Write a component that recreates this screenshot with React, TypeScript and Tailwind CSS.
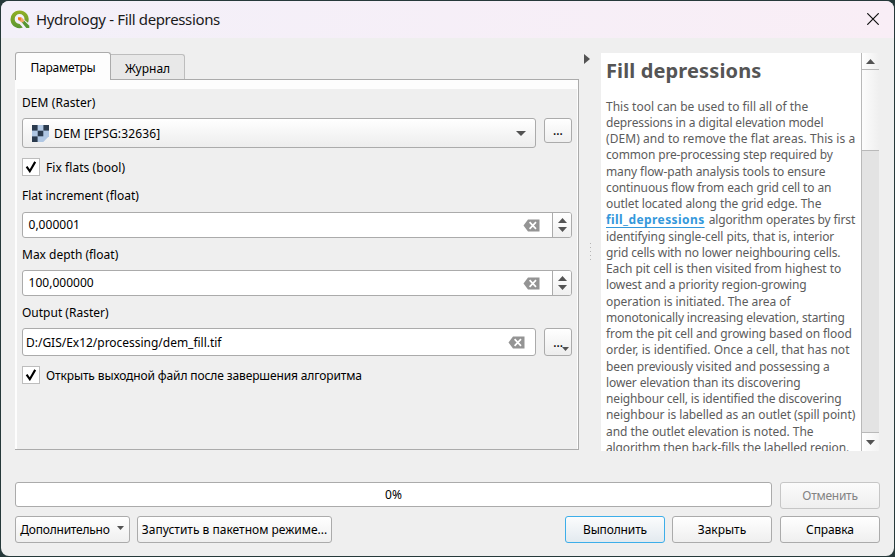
import type { ReactNode } from "react";

const helpBefore: [string, string][] = [
  ["This tool can be used to fill all of the", "tracking-[0px]"],
  ["depressions in a digital elevation model", "tracking-[-0.14px]"],
  ["(DEM) and to remove the flat areas. This is a", "tracking-[0.06px]"],
  ["common pre-processing step required by", "tracking-[-0.15px]"],
  ["many flow-path analysis tools to ensure", "tracking-[-0.1px]"],
  ["continuous flow from each grid cell to an", "tracking-[-0.11px]"],
  ["outlet located along the grid edge. The", "tracking-[-0.09px]"],
];

const helpAfter: [string, string][] = [
  ["identifying single-cell pits, that is, interior", "tracking-[-0.09px]"],
  ["grid cells with no lower neighbouring cells.", "tracking-[-0.15px]"],
  ["Each pit cell is then visited from highest to", "tracking-[-0.05px]"],
  ["lowest and a priority region-growing", "tracking-[-0.13px]"],
  ["operation is initiated. The area of", "tracking-[-0.04px]"],
  ["monotonically increasing elevation, starting", "tracking-[-0.17px]"],
  ["from the pit cell and growing based on flood", "tracking-[-0.1px]"],
  ["order, is identified. Once a cell, that has not", "tracking-[0.02px]"],
  ["been previously visited and possessing a", "tracking-[-0.12px]"],
  ["lower elevation than its discovering", "tracking-[-0.12px]"],
  ["neighbour cell, is identified the discovering", "tracking-[-0.15px]"],
  ["neighbour is labelled as an outlet (spill point)", "tracking-[-0.08px]"],
  ["and the outlet elevation is noted. The", "tracking-[-0.05px]"],
  ["algorithm then back-fills the labelled region.", "tracking-[-0.13px]"],
];

function Triangle({ dir, className = "" }: { dir: "up" | "down" | "right"; className?: string }) {
  const d = dir === "up" ? "M5 0 10 5H0z" : dir === "down" ? "M0 0h10L5 5z" : "M0 0v10l5-5z";
  return (
    <svg
      className={`shrink-0 fill-[#535353] ${className}`}
      viewBox={dir === "right" ? "0 0 5 10" : "0 0 10 5"}
      preserveAspectRatio="none"
    >
      <path d={d} />
    </svg>
  );
}

function QgisLogo() {
  return (
    <svg className="h-[19px] w-5 shrink-0" viewBox="0 0 20 19">
      <defs>
        <linearGradient id="ring" x1="0" y1="0" x2="0" y2="1">
          <stop offset="0" stopColor="#93b023" />
          <stop offset="1" stopColor="#589632" />
        </linearGradient>
      </defs>
      <path
        d="M9.6 0.4a9 8.9 0 1 0 3.2 17.2L9.6 13.9a4.9 4.9 0 1 1 4.9-4.9v1l3.5 2.7A8.9 8.9 0 0 0 9.6 0.4z"
        fill="url(#ring)"
      />
      <path d="M10.6 10.8h3.7l5 5v2.3h-3z" fill="#589632" />
      <path d="M8 7.3h3.4l2.3 2.2v2.8h-2.3L8 9.9z" fill="#f3a868" />
      <path d="M8 7.5h2.8v2.9L8 9.6z" fill="#ee7913" />
    </svg>
  );
}

function RasterIcon() {
  const dark = [[0, 0], [2, 0], [1, 1], [0, 2]];
  return (
    <svg className="h-[17px] w-[17px] shrink-0" viewBox="0 0 17 17">
      <path d="M0 0h17v11.3L11.3 17H0z" fill="#b0c7e3" />
      {dark.map(([x, y]) => (
        <rect key={`${x}-${y}`} x={x * 5.7} y={y * 5.7} width="5.6" height="5.6" fill="#2b3b4e" />
      ))}
    </svg>
  );
}

function ClearIcon() {
  return (
    <svg className="h-[13px] w-[17px] shrink-0" viewBox="0 0 17 13">
      <path d="M0.5 6.5 5 0.5h11.5v12H5z" fill="#949494" />
      <path d="M6.6 3.2l6.4 6.6M13 3.2 6.6 9.8" stroke="#fff" strokeWidth="1.7" />
    </svg>
  );
}

function Check({ label, tracking }: { label: string; tracking: string }) {
  return (
    <div className="flex h-[18px] items-center">
      <span className="flex h-[18px] w-[18px] items-center justify-center border border-[#bdbdbd] bg-white">
        <svg className="h-3 w-3" viewBox="0 0 12 12">
          <path d="M1.6 5.6 4.8 10.2 10.2 0.9" fill="none" stroke="#000" strokeWidth="2.1" />
        </svg>
      </span>
      <span className={`ml-1.5 pt-0.5 ${tracking}`}>{label}</span>
    </div>
  );
}

function Spin({ value }: { value: string }) {
  return (
    <div className="flex h-[26px] w-[550px] overflow-hidden rounded-[3px] border border-[#ababab] bg-white">
      <span className="flex flex-1 items-center pl-[5.5px] tracking-[0.02px]">{value}</span>
      <span className="mr-[12px] flex items-center">
        <ClearIcon />
      </span>
      <span className="flex w-[19px] flex-col items-center justify-center gap-1 border-l border-[#ababab] bg-gradient-to-b from-white to-[#f0f0f0]">
        <Triangle dir="up" className="h-[5px] w-[9px]" />
        <Triangle dir="down" className="h-[5px] w-[9px]" />
      </span>
    </div>
  );
}

function Button({ className, children }: { className: string; children: ReactNode }) {
  return (
    <button
      className={`flex h-[27px] shrink-0 items-center justify-center rounded-[3px] border bg-gradient-to-b whitespace-nowrap ${className}`}
    >
      {children}
    </button>
  );
}

const plain = "border-[#ababab] from-white to-[#efefef]";

export default function App() {
  return (
    <div className="h-[557px] w-[895px] overflow-hidden bg-[#26393a] pt-px pr-px pl-px font-['Noto_Sans','Open_Sans',sans-serif] text-xs text-black">
      <div className="flex h-[555px] flex-col overflow-hidden rounded-lg bg-[#efefef]">
        <header className="flex h-[37px] shrink-0 items-center bg-gradient-to-r from-[#f3f0f9] to-[#f9eef6] pl-[9px]">
          <QgisLogo />
          <h1 className="ml-1.5 pb-0.5 text-[15px] tracking-[-0.35px] text-[#1a1a1a]">Hydrology - Fill depressions</h1>
          <svg className="mr-[15px] mb-px ml-auto h-3 w-3" viewBox="0 0 12 12">
            <path d="M0.3 0.3l11.4 11.4M11.7 0.3 0.3 11.7" stroke="#111" strokeWidth="1.2" />
          </svg>
        </header>

        <main className="flex h-[413px] shrink-0 pl-[14px]">
          <section className="flex w-[564px] flex-col pt-3.5">
            <div className="flex h-[27px] items-end">
              <div className="z-10 -mb-px flex h-7 w-24 items-center justify-center rounded-t-[3px] border border-b-0 border-[#ababab] bg-[#fdfdfd] pt-0.5">
                <span className="tracking-[-0.24px]">Параметры</span>
              </div>
              <div className="-ml-px flex h-[25px] w-[75px] items-center justify-center rounded-tr-[3px] border border-b-0 border-[#bdbdbd] bg-[#e8e8e8] pt-1">
                <span>Журнал</span>
              </div>
            </div>
            <div className="flex h-[371px] flex-col border-t border-r border-b border-[#ababab] bg-[#fdfdfd] pt-[9px] pr-px pl-0.5">
              <div className="flex h-full flex-col bg-[#efefef] pt-1.5 pl-[5px]">
                <label className="h-[23px] leading-4 tracking-[0.07px]">DEM (Raster)</label>
                <div className="flex h-[30px] gap-2">
                  <div className="flex w-[514px] items-center rounded-[3px] border border-[#ababab] bg-gradient-to-b from-white to-[#ededed] pr-[9px] pl-[9px]">
                    <RasterIcon />
                    <span className="ml-[5px] pt-0.5 tracking-[0.13px]">DEM [EPSG:32636]</span>
                    <Triangle dir="down" className="ml-auto h-[5px] w-2.5" />
                  </div>
                  <div className="flex h-[25px] w-7 items-end justify-center rounded-[3px] border border-[#ababab] bg-gradient-to-b from-white to-[#efefef] pb-[3px] font-medium">
                    ...
                  </div>
                </div>
                <div className="h-7 pt-2.5">
                  <Check label="Fix flats (bool)" tracking="tracking-[0.06px]" />
                </div>
                <label className="mt-3 h-6 leading-4">Flat increment (float)</label>
                <Spin value="0,000001" />
                <label className="mt-[9px] h-[23px] leading-4">Max depth (float)</label>
                <Spin value="100,000000" />
                <label className="mt-[9px] h-[23px] leading-4">Output (Raster)</label>
                <div className="flex h-7 gap-2">
                  <div className="flex w-[514px] items-center rounded-[3px] border border-[#ababab] bg-white pr-2.5 pl-[3px]">
                    <span className="flex-1 pt-0.5 tracking-[-0.02px]">D:/GIS/Ex12/processing/dem_fill.tif</span>
                    <ClearIcon />
                  </div>
                  <div className="flex w-7 items-end justify-end rounded-[3px] border border-[#ababab] bg-gradient-to-b from-white to-[#ededed] pr-[2px] pb-1">
                    <span className="font-medium">...</span>
                    <Triangle dir="down" className="-ml-px h-[4px] w-[7px]" />
                  </div>
                </div>
                <div className="pt-2.5">
                  <Check label="Открыть выходной файл после завершения алгоритма" tracking="tracking-[-0.12px]" />
                </div>
              </div>
            </div>
          </section>

          <div className="flex w-[22px] shrink-0 flex-col pt-4 pl-[5px]">
            <Triangle dir="right" className="h-[10px] w-[6px]" />
            <span className="mt-[179px] ml-1.5 h-5 w-px bg-[repeating-linear-gradient(to_bottom,#b5b5b5_0px,#b5b5b5_1px,transparent_1px,transparent_4px)]" />
          </div>

          <section className="mt-[15px] flex h-[398px] w-[278px] overflow-hidden">
            <article className="h-full w-[260px] overflow-hidden bg-white pt-1 pl-[5px] leading-[16.25px] whitespace-nowrap text-[#5c5c5c]">
              <h2 className="mb-[13.5px] text-xl leading-[28px] font-bold tracking-[0.13px] text-[#555]">Fill depressions</h2>
              {helpBefore.map(([t, c]) => (
                <p key={t} className={c}>{t}</p>
              ))}
              <p className="flex tracking-[-0.13px]">
                <a className="mr-1 tracking-[0.42px] font-bold text-[#3498db] underline decoration-1 underline-offset-[3px]">fill_depressions</a>
                algorithm operates by first
              </p>
              {helpAfter.map(([t, c]) => (
                <p key={t} className={c}>{t}</p>
              ))}
            </article>
            <div className="flex w-[18px] flex-col border-l border-[#b9b9b9] bg-[#e3e3e3]">
              <div className="flex h-[17px] shrink-0 items-center justify-center border-b border-[#b9b9b9] bg-gradient-to-r from-white to-[#efefef]">
                <Triangle dir="up" className="h-[5px] w-[9px]" />
              </div>
              <div className="h-[81px] shrink-0 border-b border-[#b9b9b9] bg-gradient-to-r from-[#fcfcfc] to-[#efefef]" />
              <div className="flex-1" />
              <div className="flex h-[19px] shrink-0 items-center justify-center border-t border-[#b9b9b9] bg-gradient-to-r from-white to-[#f3f3f3]">
                <Triangle dir="down" className="h-[5px] w-[9px]" />
              </div>
            </div>
          </section>
        </main>

        <footer className="flex flex-col gap-[7px] pt-[31px] pl-[14px]">
          <div className="flex gap-2">
            <div className="flex h-[25px] w-[757px] items-center justify-center rounded-[3px] border border-[#ababab] bg-white">0%</div>
            <Button className="w-[100px] border-[#c6c6c6] from-[#fbfbfb] to-[#efefef] text-[#838383] tracking-[-0.25px]">Отменить</Button>
          </div>
          <div className="flex">
            <Button className={`w-[115px] gap-[7px] pr-px tracking-[-0.23px] ${plain}`}>
              Дополнительно
              <Triangle dir="down" className="mb-1 h-1 w-[7px]" />
            </Button>
            <Button className={`ml-[7px] w-[195px] ${plain}`}>Запустить в пакетном режиме...</Button>
            <Button className="ml-[233px] w-[100px] border-[#3daee9] from-[#fbfcfd] to-[#e3eaef] tracking-[-0.15px]">Выполнить</Button>
            <Button className={`ml-[7px] w-[100px] ${plain}`}>Закрыть</Button>
            <Button className={`ml-2 w-[100px] tracking-[-0.1px] ${plain}`}>Справка</Button>
          </div>
        </footer>
      </div>
    </div>
  );
}
